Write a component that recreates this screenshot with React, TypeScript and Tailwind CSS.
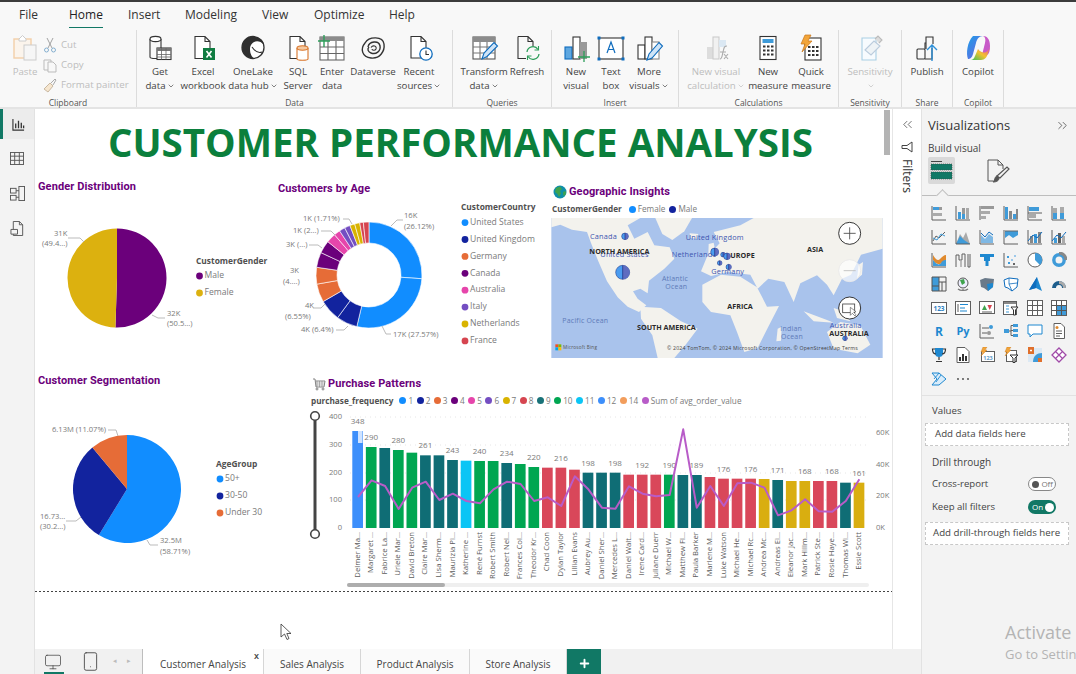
import React from "react";
import { ChevronsLeft, ChevronsRight, ChevronDown, Monitor, Smartphone, Plus } from "lucide-react";

const ui = "font-['Open_Sans','Noto_Sans',sans-serif]";
const BL = "#3f9bd9";
const GR = "#5f5f5f";
const DK = "#333333";

function pt(cx: number, cy: number, r: number, pct: number) {
  const a = (pct / 100) * Math.PI * 2 - Math.PI / 2;
  return [cx + r * Math.cos(a), cy + r * Math.sin(a)];
}
function wedge(cx: number, cy: number, r: number, a: number, b: number) {
  const [x0, y0] = pt(cx, cy, r, a);
  const [x1, y1] = pt(cx, cy, r, b);
  return `M${cx} ${cy}L${x0} ${y0}A${r} ${r} 0 ${b - a > 50 ? 1 : 0} 1 ${x1} ${y1}Z`;
}
function ring(cx: number, cy: number, R: number, r: number, a: number, b: number) {
  const [x0, y0] = pt(cx, cy, R, a);
  const [x1, y1] = pt(cx, cy, R, b);
  const [x2, y2] = pt(cx, cy, r, b);
  const [x3, y3] = pt(cx, cy, r, a);
  const l = b - a > 50 ? 1 : 0;
  return `M${x0} ${y0}A${R} ${R} 0 ${l} 1 ${x1} ${y1}L${x2} ${y2}A${r} ${r} 0 ${l} 0 ${x3} ${y3}Z`;
}

function Ic({ children }: { children: React.ReactNode }) {
  return (
    <svg width="30" height="28" viewBox="0 0 30 28" fill="none" strokeWidth="1.1" className="block mx-auto">
      {children}
    </svg>
  );
}
const page = "M7 2.5H17L22 7.5V24.5H7Z M17 2.5V7.5H22";

const rIcons: Record<string, React.ReactNode> = {
  get: (
    <Ic>
      <path d="M5 5V23C5 25 16 25 16 23V5" stroke={DK} />
      <ellipse cx="10.5" cy="5" rx="5.5" ry="2.6" stroke={DK} fill="#fff" />
      <rect x="12" y="14" width="14" height="11.5" fill="#fff" stroke={DK} />
      <rect x="12" y="14" width="14" height="3" fill="#777" />
      <path d="M12 20.5H26M12 23H26M16.5 14V25.5M21 14V25.5" stroke="#666" strokeWidth=".8" />
    </Ic>
  ),
  excel: (
    <Ic>
      <path d={page} stroke={DK} fill="#fff" />
      <rect x="15" y="14" width="12" height="12" fill="#107c41" />
      <path d="M18.5 17L23.5 23.5M23.5 17L18.5 23.5" stroke="#fff" strokeWidth="1.6" />
    </Ic>
  ),
  lake: (
    <Ic>
      <circle cx="15" cy="13.5" r="11" fill="#fff" stroke={DK} strokeWidth="1.3" />
      <path d="M4 13.5A11 11 0 0 1 15 2.5C22 2.5 26 8 26 11C20 4 12 8 12 15C12 20 14 23 16 24.5C9 25 4 19 4 13.5Z" fill="#2f2f2f" />
      <path d="M14 13C16 16 19 20 24 18" stroke={DK} />
    </Ic>
  ),
  sql: (
    <Ic>
      <path d={page} stroke={DK} fill="#fff" />
      <path d="M14 14V25C14 26.6 25 26.6 25 25V14" stroke="#d9762b" fill="#fff" />
      <ellipse cx="19.5" cy="14" rx="5.5" ry="2.2" stroke="#d9762b" fill="#f5c9a0" />
    </Ic>
  ),
  enter: (
    <Ic>
      <rect x="3" y="3" width="24" height="23" stroke="#666" fill="#fff" />
      <rect x="3" y="3" width="24" height="4" fill="#8c8c8c" />
      <path d="M3 13H27M3 19.5H27M11 7V26M19 7V26" stroke="#666" />
      <path d="M1 7H13M7 1V13" stroke="#2e9e5b" strokeWidth="1.4" />
    </Ic>
  ),
  dv: (
    <Ic>
      <path d="M7 9C11 2 25 2 26 10C27 17 22 25 13 24C4 23 2 15 7 9Z" stroke={DK} strokeWidth="1.4" />
      <path d="M10 13C11 7 21 6 22 12C23 17 18 21 13 19C10 18 9 15 11 13" stroke={DK} strokeWidth="1.4" />
      <path d="M13 13.5C15 10.5 19 12 18 15C17 17 14 16.5 14 15" stroke={DK} />
    </Ic>
  ),
  recent: (
    <Ic>
      <path d="M7 2.5H17L22 7.5V24H7Z M17 2.5V7.5H22" stroke={DK} fill="#fff" />
      <circle cx="22" cy="20" r="6.2" fill="#fff" stroke="#0f6cbd" strokeWidth="1.3" />
      <path d="M22 16.5V20.5H25" stroke="#333" />
    </Ic>
  ),
  transform: (
    <Ic>
      <rect x="4" y="3" width="22" height="22" stroke="#555" fill="#fff" />
      <rect x="4" y="3" width="22" height="5" fill="#8c8c8c" />
      <path d="M4 13H26M4 19H26M11 8V25M18 8V25" stroke="#777" />
      <path d="M13 25L15 19L25 8.5L28.5 12L18 22.5Z" fill="#cfe4f7" stroke="#0f6cbd" />
    </Ic>
  ),
  refresh: (
    <Ic>
      <path d="M6 2.5H16L21 7.5V12M6 2.5V24.5H14M16 2.5V7.5H21" stroke={DK} />
      <path d="M15 18A6 6 0 0 1 26 15.5M27 20A6 6 0 0 1 16 22.5" stroke="#2e9e5b" strokeWidth="1.3" />
      <path d="M26.5 12V16H22.5M15.5 26V22H19.5" stroke="#2e9e5b" />
    </Ic>
  ),
  nv: (
    <Ic>
      <rect x="4" y="13" width="7" height="12" fill="#5ea7e0" stroke="#0f6cbd" />
      <rect x="12" y="3" width="7" height="22" fill="#fff" stroke={DK} />
      <rect x="19" y="8" width="7" height="17" fill="#999" />
      <path d="M17 23H29M23 17V29" stroke="#2e9e5b" strokeWidth="1.3" />
    </Ic>
  ),
  tb: (
    <Ic>
      <rect x="3" y="4" width="24" height="21" stroke={DK} fill="#fff" />
      <path d="M3 25H27" stroke="#888" strokeWidth="2" />
      <path d="M11 19L15 8L19 19M12.5 15.5H17.5" stroke="#0f6cbd" strokeWidth="1.2" />
      <rect x="1.5" y="2.5" width="3" height="3" fill="#0f6cbd" />
      <rect x="25.5" y="2.5" width="3" height="3" fill="#0f6cbd" />
      <rect x="1.5" y="23.5" width="3" height="3" fill="#0f6cbd" />
      <rect x="25.5" y="23.5" width="3" height="3" fill="#0f6cbd" />
    </Ic>
  ),
  mv: (
    <Ic>
      <rect x="4" y="11" width="7" height="14" stroke={DK} fill="#fff" />
      <rect x="11" y="3" width="7" height="22" stroke={DK} fill="#fff" />
      <rect x="18" y="8" width="7" height="17" stroke="#888" fill="#fff" />
      <path d="M13 26L15 20L25 8.5L28.5 12L18 24Z" fill="#cfe4f7" stroke="#0f6cbd" />
    </Ic>
  ),
  nvc: (
    <Ic>
      <rect x="6" y="13" width="6" height="12" fill="#ddd" />
      <rect x="12" y="3" width="6" height="22" fill="#f1f1f1" stroke="#ccc" />
      <rect x="18" y="6" width="7" height="7" fill="#dbe8f3" />
      <path d="M19 25C21 25 21 22 22 18C23 14 23 12 26 12M19 18H25M23 20L27 25M27 20L23 25" stroke="#aaa" />
    </Ic>
  ),
  nm: (
    <Ic>
      <rect x="7" y="2.5" width="16" height="23" stroke={DK} fill="#fff" />
      <rect x="9.5" y="5" width="11" height="4" fill="#3f9bd9" />
      <path d="M10 12.5H12.5M14 12.5H16.5M18 12.5H20.5M10 16.5H12.5M14 16.5H16.5M18 16.5H20.5M10 20.5H12.5M14 20.5H16.5M18 20.5H20.5" stroke={DK} strokeWidth="2" />
    </Ic>
  ),
  qm: (
    <Ic>
      <rect x="9" y="4" width="16" height="22" stroke={DK} fill="#fff" />
      <path d="M12 13H14.5M16 13H18.5M20 13H22.5M12 17H14.5M16 17H18.5M20 17H22.5M12 21H14.5M16 21H18.5M20 21H22.5" stroke={DK} strokeWidth="2" />
      <path d="M9 1H15L12 7H16L6 18L9 10H5Z" fill="#f2a53a" stroke="#c9761a" strokeWidth=".7" />
    </Ic>
  ),
  sens: (
    <Ic>
      <path d="M7 4H21V26H7Z" stroke="#a9cfe4" fill="#f7fbfe" />
      <path d="M10 16L19 7L25 12L16 21Z" stroke="#bcd" fill="#eef3f6" />
      <path d="M20 5L23 2L27 6L24 9" stroke="#bbb" fill="#ddd" />
    </Ic>
  ),
  pub: (
    <Ic>
      <rect x="5" y="15" width="8" height="10" rx="1" stroke={DK} />
      <path d="M13 25H20V14M13 15V9H14" stroke={DK} />
      <path d="M14 15V3H21V10" stroke={DK} />
      <path d="M20 27V12M15 16L20 11L25 16" stroke="#2c8fd8" strokeWidth="1.4" />
    </Ic>
  ),
  cop: (
    <Ic>
      <defs>
        <linearGradient id="cg1" x1="0" y1="0" x2="1" y2="1">
          <stop offset="0" stopColor="#1aa0e8" />
          <stop offset="1" stopColor="#7a5be0" />
        </linearGradient>
        <linearGradient id="cg2" x1="0" y1="1" x2="1" y2="0">
          <stop offset="0" stopColor="#3bbf5a" />
          <stop offset=".5" stopColor="#f2c230" />
          <stop offset="1" stopColor="#e8508a" />
        </linearGradient>
      </defs>
      <path d="M10 2H20C16 2 14 5 13 9L10 20C9 24 7 25 5 25C3 20 4 8 10 2Z" fill="url(#cg1)" />
      <path d="M20 2C24 2 27 5 27 12C27 17 26 20 24 21L19 21L22 9C23 5 22 3 20 2Z" fill="#c85ac8" />
      <path d="M8 26H18C22 26 24 23 25 19L27 13C24 21 18 19 15 15L12 22C11 25 9 26 8 26Z" fill="url(#cg2)" />
    </Ic>
  ),
};

function RB({ w, icon, l1, l2, chev, off }: { w: string; icon: string; l1: string; l2?: string; chev?: boolean; off?: boolean }) {
  return (
    <div className={`${w} shrink-0 flex flex-col items-center`}>
      <div className="h-[28px]">{rIcons[icon]}</div>
      <div className={`mt-[3px] text-[9.7px] leading-[14px] whitespace-nowrap text-center ${off ? "text-[#bdbdbd]" : "text-[#444]"}`}>
        <div>{l1}</div>
        <div className="flex items-center justify-center h-[14px]">
          {l2}
          {chev && <ChevronDown size={8} strokeWidth={2} className="ml-[1px]" />}
        </div>
      </div>
    </div>
  );
}

function Group({ w, label, pl, children, off }: { w: string; label: string; pl: string; children: React.ReactNode; off?: boolean }) {
  return (
    <div className={`${w} shrink-0 h-[77px] flex flex-col border-r border-[#dcdcdc] relative`}>
      <div className={`flex ${pl} h-[68px] shrink-0 pt-[4px]`}>{children}</div>
      <div className={`text-center text-[8.5px] leading-[10px] ${off ? "text-[#777]" : "text-[#555]"}`}>{label}</div>
    </div>
  );
}

function Ribbon() {
  return (
    <div className="flex h-[81px] pt-[2px] bg-[#f8f8f8] border-b-2 border-[#e4e4e4] shrink-0 text-[#444]">
      <Group w="w-[137px]" label="Clipboard" pl="pl-[10px]">
        <div className="w-[30px] flex flex-col items-center">
          <svg width="28" height="28" viewBox="0 0 28 28" fill="none">
            <rect x="3" y="5" width="17" height="19" stroke="#f3cfa9" strokeWidth="1.4" fill="#fbf4ec" />
            <path d="M8 5L11.5 1.5L15 5V7H8Z" stroke="#ccc" fill="#fff" />
            <rect x="13" y="11" width="12" height="15" stroke="#ccc" fill="#f6f6f6" />
          </svg>
          <div className="mt-[3px] text-[9.7px] leading-[14px] text-[#bdbdbd]">Paste</div>
        </div>
        <div className="ml-[3px] flex flex-col text-[9.7px] text-[#bdbdbd] leading-[20px] pt-[1px] whitespace-nowrap">
          <div className="flex items-center gap-[4px] h-[20px]">
            <svg width="14" height="16" viewBox="0 0 14 16" fill="none" stroke="#999" strokeWidth=".9"><path d="M4 1L9 11M10 1L5 11" /><circle cx="3.5" cy="13" r="2" stroke="#7aa8cc" /><circle cx="10.5" cy="13" r="2" stroke="#7aa8cc" /></svg>
            Cut
          </div>
          <div className="flex items-center gap-[4px] h-[20px]">
            <svg width="14" height="16" viewBox="0 0 14 16" fill="none" stroke="#bbb"><path d="M1 3H8V13H1Z" /><path d="M5 5H10L13 8V15H5Z" fill="#f8f8f8" /></svg>
            Copy
          </div>
          <div className="flex items-center gap-[4px] h-[20px]">
            <svg width="14" height="16" viewBox="0 0 14 16" fill="none" stroke="#c9b8a0"><path d="M1 12L7 6L10 9L5 15Z" fill="#f6e6cf" /><path d="M8 6L12 2L13 3L10 8" stroke="#aaa" /></svg>
            Format painter
          </div>
        </div>
      </Group>
      <Group w="w-[316px]" label="Data" pl="pl-[2px]">
        <RB w="w-[42px]" icon="get" l1="Get" l2="data" chev />
        <RB w="w-[44px]" icon="excel" l1="Excel" l2="workbook" />
        <RB w="w-[56px]" icon="lake" l1="OneLake" l2="data hub" chev />
        <RB w="w-[34px]" icon="sql" l1="SQL" l2="Server" />
        <RB w="w-[34px]" icon="enter" l1="Enter" l2="data" />
        <RB w="w-[48px]" icon="dv" l1="Dataverse" />
        <RB w="w-[44px]" icon="recent" l1="Recent" l2="sources" chev />
      </Group>
      <Group w="w-[99px]" label="Queries" pl="pl-[10px]">
        <RB w="w-[42px]" icon="transform" l1="Transform" l2="data" chev />
        <RB w="w-[44px]" icon="refresh" l1="Refresh" />
      </Group>
      <Group w="w-[127px]" label="Insert" pl="pl-[4px]">
        <RB w="w-[40px]" icon="nv" l1="New" l2="visual" />
        <RB w="w-[30px]" icon="tb" l1="Text" l2="box" />
        <RB w="w-[46px]" icon="mv" l1="More" l2="visuals" chev />
      </Group>
      <Group w="w-[160px]" label="Calculations" pl="pl-[7px]">
        <RB w="w-[60px]" icon="nvc" l1="New visual" l2="calculation" chev off />
        <RB w="w-[44px]" icon="nm" l1="New" l2="measure" />
        <RB w="w-[42px]" icon="qm" l1="Quick" l2="measure" />
      </Group>
      <Group w="w-[63px]" label="Sensitivity" pl="pl-0">
        <RB w="w-[62px]" icon="sens" l1="Sensitivity" chev off />
      </Group>
      <Group w="w-[51px]" label="Share" pl="pl-0">
        <RB w="w-[50px]" icon="pub" l1="Publish" />
      </Group>
      <Group w="w-[51px]" label="Copilot" pl="pl-0">
        <RB w="w-[50px]" icon="cop" l1="Copilot" />
      </Group>
    </div>
  );
}

const tabs = [
  ["File", "w-[50px]"],
  ["Home", "w-[59px]"],
  ["Insert", "w-[57px]"],
  ["Modeling", "w-[77px]"],
  ["View", "w-[52px]"],
  ["Optimize", "w-[75px]"],
  ["Help", "w-[40px]"],
];

function Menu() {
  return (
    <div className="h-[28px] shrink-0 flex pl-[19px] bg-[#f8f8f8] border-t-2 border-[#3c3c3c] text-[12px] text-[#333]">
      {tabs.map(([t, w]) => (
        <div key={t} className={`${w} h-[26px] pt-[5px] leading-[16px]`}>
          <span className={t === "Home" ? "inline-block pb-[4px] border-b-2 border-[#117865] text-[#222]" : ""}>{t}</span>
        </div>
      ))}
    </div>
  );
}

function Rail() {
  return (
    <div className="w-[35px] shrink-0 bg-[#f3f3f3] border-r border-[#e2e2e2] flex flex-col items-center">
      <div className="w-full h-[30px] border-l-[3px] border-[#117865] bg-[#ececec] flex items-center justify-center">
        <svg width="13" height="13" viewBox="0 0 14 14" fill="none" stroke="#333" strokeWidth="1.2"><path d="M1 1V13H13" /><path d="M4 11V6M7 11V3M10 11V5M12.5 11V8" strokeWidth="1.4" /></svg>
      </div>
      <div className="h-[35px] mt-[2px] flex items-center">
        <svg width="14" height="13" viewBox="0 0 15 14" fill="none" stroke="#555"><rect x=".5" y=".5" width="14" height="13" /><path d="M.5 4.5H14.5M.5 9H14.5M5 .5V13.5M10 .5V13.5" /></svg>
      </div>
      <div className="h-[35px] flex items-center">
        <svg width="15" height="15" viewBox="0 0 16 16" fill="none" stroke="#555"><rect x=".5" y="2.5" width="6" height="5" /><rect x=".5" y="10" width="6" height="5" /><rect x="9.5" y=".5" width="6" height="15" /><path d="M6.5 5H9.5M6.5 12H9.5" /></svg>
      </div>
      <div className="h-[35px] flex items-center">
        <svg width="15" height="15" viewBox="0 0 16 16" fill="none" stroke="#555"><path d="M3.5 .5H10L13.5 4V15.5H3.5Z" /><path d="M1 9H8V14H1Z" fill="#f3f3f3" /><path d="M10 .5V4H13.5" /></svg>
      </div>
    </div>
  );
}

const lab = "#7a7a7a";
function T({ x, y, c, b, s }: { x: number; y: number; c: string; b?: boolean; s?: number }) {
  return (
    <text x={x} y={y} fontSize={s ?? 7.6} fill={b ? "#505050" : lab} fontWeight={b ? 700 : 400} fontFamily="'Open Sans',sans-serif" dominantBaseline="middle">
      {c}
    </text>
  );
}
function Lg({ x, y, col, c }: { x: number; y: number; col: string; c: string }) {
  return (
    <>
      <circle cx={x} cy={y} r="3.4" fill={col} />
      <T x={x + 5} y={y} c={c} s={8.6} />
    </>
  );
}
const title = "text-[11px] leading-[16px] font-bold text-[#6b007b] font-['Roboto',sans-serif] tracking-[0.1px]";

function GenderChart() {
  return (
    <svg width="243" height="178" viewBox="35 194 243 178" className="block">
      <path d={wedge(117, 277, 49.5, 0, 50.5)} fill="#6b007b" />
      <path d={wedge(117, 277, 49.5, 50.5, 100)} fill="#dcb10f" />
      <T x={54} y={233} c="31K" />
      <T x={42} y={243} c="(49.4...)" />
      <path d="M68 237H80L84 241" stroke="#bbb" fill="none" />
      <T x={167} y={313} c="32K" />
      <T x={167} y={323} c="(50.5...)" />
      <path d="M152 314L158 317H165" stroke="#bbb" fill="none" />
      <T x={196} y={261} c="CustomerGender" b s={8.4} />
      <Lg x={199.5} y={275} col="#6b007b" c="Male" />
      <Lg x={199.5} y={292} col="#dcb10f" c="Female" />
    </svg>
  );
}

const dSegs: [number, string][] = [
  [26.12, "#118dff"], [27.57, "#118dff"], [6.4, "#12239e"], [6.55, "#12239e"],
  [5.6, "#e66c37"], [5.1, "#e66c37"], [4.6, "#6b007b"], [3.9, "#6b007b"],
  [2.9, "#e645ab"], [1.9, "#e645ab"], [1.8, "#744ec2"], [1.71, "#744ec2"],
  [1.5, "#d9b300"], [1.55, "#d9b300"], [1.1, "#d64550"], [1.69, "#d64550"],
];

function DonutChart() {
  let acc = 0;
  return (
    <svg width="267" height="176" viewBox="278 196 267 176" className="block">
      {dSegs.map(([v, c], i) => {
        const d = ring(369, 274, 53, 32, acc, acc + v);
        acc += v;
        return <path key={i} d={d} fill={c} stroke="#fff" strokeWidth=".6" />;
      })}
      <T x={404} y={215} c="16K" />
      <T x={404} y={226} c="(26.12%)" />
      <path d="M391 225L397 219H403" stroke="#bbb" fill="none" />
      <T x={303} y={218} c="1K (1.71%)" />
      <path d="M343 218H349L352 223" stroke="#bbb" fill="none" />
      <T x={293} y={230} c="1K (2...)" />
      <path d="M321 230H331L335 234" stroke="#bbb" fill="none" />
      <T x={286} y={244} c="3K (...)" />
      <path d="M309 244H318L322 247" stroke="#bbb" fill="none" />
      <T x={290} y={270} c="3K" />
      <T x={283} y={281} c="(4....)" />
      <T x={305} y={305} c="4K" />
      <T x={285} y={316} c="(6.55%)" />
      <path d="M313 307H321L325 303" stroke="#bbb" fill="none" />
      <T x={301} y={329} c="4K (6.4%)" />
      <path d="M336 329H344L348 325" stroke="#bbb" fill="none" />
      <T x={393} y={334} c="17K (27.57%)" />
      <path d="M382 325L386 333H391" stroke="#bbb" fill="none" />
      <T x={461} y={207} c="CustomerCountry" b s={8.4} />
      {[
        ["United States", "#118dff"], ["United Kingdom", "#12239e"], ["Germany", "#e66c37"], ["Canada", "#6b007b"],
        ["Australia", "#e645ab"], ["Italy", "#744ec2"], ["Netherlands", "#d9b300"], ["France", "#d64550"],
      ].map(([n, c], i) => (
        <Lg key={n} x={465} y={221.6 + i * 16.9} col={c} c={n} />
      ))}
    </svg>
  );
}

function Bubble({ x, y, r }: { x: number; y: number; r: number }) {
  return (
    <g>
      <circle cx={x} cy={y} r={r} fill="#4a9cf0" stroke="#1c2a78" strokeWidth="1.5" />
      <path d={`M${x} ${y - r}A${r} ${r} 0 0 1 ${x} ${y + r}Z`} fill="#5f6cc0" />
      <path d={`M${x} ${y - r}V${y + r}`} stroke="#1c2a78" strokeWidth="2" />
    </g>
  );
}
function ML({ x, y, c, b, s, col }: { x: number; y: number; c: string; b?: boolean; s?: number; col?: string }) {
  return (
    <text x={x} y={y} fontSize={s ?? 22} fontWeight={b ? 700 : 400} fill={col ?? (b ? "#2a2a2a" : "#3d55b0")} fontFamily="'Open Sans',sans-serif" dominantBaseline="middle" letterSpacing={b ? 0 : 0.6}>
      {c}
    </text>
  );
}

function MapChart() {
  const land = "#f3f2ed";
  return (
    <svg width="332" height="140" viewBox="33 130 994 420" className="block">
      <rect x="33" y="130" width="994" height="420" fill="#a9c3ec" />
      <g fill={land}>
        <path d="M33 130L33 158L60 150L95 165L140 172L152 205L172 255L200 320L232 368L262 396L296 412L318 392L292 372L278 350L300 342L322 356L326 318L372 282L402 252L388 218L342 212L322 172L282 192L262 152L300 130Z" />
        <path d="M345 130H455L432 170L396 196L366 178Z" />
        <path d="M448 176L474 178L470 192L450 190Z" />
        <path d="M300 396L362 400L422 440L472 462L436 510L402 550H352L336 482L302 432Z" />
        <path d="M486 330L542 300L600 306L650 338L680 396L716 394L682 460L652 520L612 532L590 472L570 422L512 412L486 382Z" />
        <path d="M482 290L500 246L538 206L520 172L600 152L640 130H1027V222L962 240L932 300L905 312L880 362L860 330L830 302L780 326L760 382L732 322L684 312L652 342L630 300L562 292L512 304Z" />
        <path d="M860 472L900 442L960 452L990 510L952 536L880 522Z" />
        <path d="M505 208L520 204L526 234L504 240Z" />
        <path d="M712 462L724 456L722 498L708 500Z" />
        <path d="M790 410L860 436L880 444L820 440ZM880 400L910 410L930 440L890 430Z" />
        <path d="M955 270L968 262L965 300L950 312Z" />
      </g>
      <ML x={149} y={187} c="Canada" />
      <ML x={436} y={191} c="United Kingdom" />
      <ML x={180} y={241} c="United States" />
      <ML x={147} y={232} c="NORTH AMERICA" b s={21.5} />
      <ML x={394} y={241} c="Netherlands" />
      <ML x={570} y={245} c="UROPE" b s={21.5} />
      <ML x={800} y={225} c="ASIA" b s={21.5} />
      <ML x={513} y={291} c="Germany" />
      <ML x={365} y={312} c="Atlantic" s={21} col="#5d7ab8" />
      <ML x={375} y={336} c="Ocean" s={21} col="#5d7ab8" />
      <ML x={561} y={397} c="AFRICA" b s={21.5} />
      <ML x={66} y={440} c="Pacific Ocean" s={21} col="#5d7ab8" />
      <ML x={290} y={461} c="SOUTH AMERICA" b s={21.5} />
      <ML x={720} y={464} c="Indian" s={21} col="#5d7ab8" />
      <ML x={722} y={488} c="Ocean" s={21} col="#5d7ab8" />
      <ML x={868} y={453} c="Australia" />
      <ML x={867} y={477} c="AUSTRALIA" b s={21.5} />
      <Bubble x={247} y={293} r={21} />
      <Bubble x={254} y={185} r={10} />
      <Bubble x={523} y={232} r={12} />
      <Bubble x={548} y={240} r={7} />
      <Bubble x={560} y={245} r={10} />
      <Bubble x={538} y={265} r={7} />
      <Bubble x={565} y={277} r={8} />
      <Bubble x={914} y={491} r={7} />
      <circle cx="928" cy="176" r="33" fill="#fff" stroke="#111" strokeWidth="2.5" />
      <path d="M910 176H946M928 158V194" stroke="#444" strokeWidth="2.5" />
      <circle cx="928" cy="288" r="33" fill="#fff" fillOpacity=".65" stroke="#e8e8e8" strokeWidth="2.5" />
      <path d="M910 288H946" stroke="#bbb" strokeWidth="2.5" />
      <circle cx="928" cy="400" r="33" fill="#fff" stroke="#111" strokeWidth="2.5" />
      <rect x="907" y="388" width="36" height="26" fill="none" stroke="#444" strokeWidth="2.5" />
      <path d="M930 398L930 422L936 416L944 424L947 420L940 413L947 411Z" fill="#fff" stroke="#333" strokeWidth="1.6" />
      <rect x="45" y="509" width="9" height="9" fill="#f25022" />
      <rect x="54" y="509" width="9" height="9" fill="#7fba00" />
      <rect x="45" y="518" width="9" height="9" fill="#00a4ef" />
      <rect x="54" y="518" width="9" height="9" fill="#ffb900" />
      <ML x={68} y={519} c="Microsoft Bing" s={14} col="#555" />
      <ML x={380} y={523} c="© 2024 TomTom, © 2024 Microsoft Corporation, © OpenStreetMap  Terms" s={15.5} col="#444" />
    </svg>
  );
}

function SegChart() {
  return (
    <svg width="270" height="202" viewBox="35 388 270 202" className="block">
      <path d={wedge(127, 488, 54, 0, 58.71)} fill="#118dff" />
      <path d={wedge(127, 488, 54, 58.71, 88.93)} fill="#12239e" />
      <path d={wedge(127, 488, 54, 88.93, 100)} fill="#e66c37" />
      <T x={52} y={429} c="6.13M (11.07%)" />
      <path d="M108 429H116L118 435" stroke="#bbb" fill="none" />
      <T x={40} y={516} c="16.73..." />
      <T x={40} y={526} c="(30.2...)" />
      <path d="M66 520H76L81 516" stroke="#bbb" fill="none" />
      <T x={160} y={540} c="32.5M" />
      <T x={160} y={551} c="(58.71%)" />
      <path d="M147 539L150 544H158" stroke="#bbb" fill="none" />
      <T x={216} y={464} c="AgeGroup" b s={8.4} />
      <Lg x={220} y={478} col="#118dff" c="50+" />
      <Lg x={220} y={495} col="#12239e" c="30-50" />
      <Lg x={220} y={512} col="#e66c37" c="Under 30" />
    </svg>
  );
}

const C: Record<string, string> = { b: "#3d8ffb", g: "#00a651", t: "#0f6d75", r: "#d9475a", y: "#d9ae10", c: "#0bc5f5" };
const names = ["Delmer Ma...", "Margaret ...", "Fabrice La...", "Uriele Mar...", "David Breton", "Claire Mar...", "Lisa Sherm...", "Maurizia Pi...", "Katherine ...", "René Furnst", "Robert Smith", "Robert Nel...", "Frances Col...", "Theodor Kr...", "Chad Coon", "Dylan Taylor", "Lillian Evans", "Aubrey Au...", "Daniel Sher...", "Mercedes L...", "Daniel Walt...", "Irene Card...", "Juliane Duerr", "Michael W...", "Matthew Fl...", "Paula Barker", "Marlene M...", "Luke Watson", "Michael He...", "Michael Rc...", "Andrea Mc...", "Andreas Ei...", "Eleanor Jac...", "Mark Hillm...", "Patrick Ste...", "Rosie Haye...", "Thomas Wi...", "Essie Scott"];
const cols = "bgtggtttcggtggrrrtttrrrgttrrrrytyyrrty".slice(0, 38);
const tops = [180, 228, 231, 237, 245, 253, 253, 267, 269, 270, 270, 276, 279, 288, 290, 290, 296, 305, 305, 305, 311, 311, 311, 311, 312, 312, 318, 323, 323, 323, 324, 327, 330, 330, 330, 330, 335, 335];
const lineY = [378, 328, 345, 414, 350, 332, 387, 368, 390, 397, 355, 332, 339, 390, 379, 405, 316, 355, 410, 413, 346, 368, 376, 372, 175, 410, 345, 405, 337, 335, 350, 433, 418, 385, 421, 422, 390, 325];
const vals: Record<number, string> = { 0: "348", 1: "290", 3: "280", 5: "261", 7: "243", 9: "240", 11: "234", 13: "220", 15: "216", 17: "198", 19: "198", 21: "192", 23: "190", 25: "189", 27: "176", 29: "176", 31: "171", 33: "168", 35: "168", 37: "161" };

function ComboChart() {
  const y = (z: number) => 370 + z / 3;
  const line = lineY.map((v, i) => `${358 + 13.55 * i},${y(v)}`).join(" ");
  return (
    <svg width="585" height="182" viewBox="305 408 585 182" className="block">
      <path d="M315 416V533" stroke="#444" strokeWidth="3" />
      <circle cx="315" cy="415" r="4.3" fill="#fff" stroke="#444" strokeWidth="1.6" />
      <circle cx="315" cy="533" r="4.3" fill="#fff" stroke="#444" strokeWidth="1.6" />
      {[["400", 416], ["300", 444], ["200", 472], ["100", 499], ["0", 527]].map(([t, yy]) => (
        <text key={t} x={342} y={yy as number} textAnchor="end" fontSize="7.6" fill={lab} fontFamily="'Open Sans',sans-serif" dominantBaseline="middle">{t}</text>
      ))}
      {[416, 444, 472, 499].map((v) => (
        <path key={v} d={`M350 ${v}H866`} stroke="#e6e6e6" strokeDasharray="1 4" />
      ))}
      {names.map((n, i) => {
        const x = 352.3 + 13.55 * i;
        const cx = x + 5.35;
        return (
          <g key={n}>
            <rect x={x} y={y(tops[i])} width="10.7" height={527 - y(tops[i])} fill={C[cols[i]]} />
            {vals[i] && (
              <text x={cx} y={y(tops[i]) - 9} textAnchor="middle" fontSize="8" fill={lab} fontFamily="'Open Sans',sans-serif" dominantBaseline="middle">{vals[i]}</text>
            )}
            <text transform={`translate(${cx} 531) rotate(-90)`} textAnchor="end" fontSize="7.7" fill="#5c5c5c" fontFamily="'Open Sans',sans-serif" dominantBaseline="middle">{n}</text>
          </g>
        );
      })}
      <rect x="358" y="430" width="4.5" height="12" fill="#cfe3ff" />
      <polyline points={line} fill="none" stroke="#b85cc8" strokeWidth="2" strokeLinejoin="round" />
      {[["60K", 432], ["40K", 464], ["20K", 495], ["0K", 527]].map(([t, yy]) => (
        <text key={t} x={876} y={yy as number} fontSize="7.6" fill={lab} fontFamily="'Open Sans',sans-serif" dominantBaseline="middle">{t}</text>
      ))}
      <rect x="347" y="582" width="522" height="4" rx="2" fill="#efefef" />
      <rect x="347" y="582" width="98" height="4" rx="2" fill="#adadad" />
    </svg>
  );
}

const legendItems: [string, string][] = [
  ["1", "#118dff"], ["2", "#12239e"], ["3", "#e66c37"], ["4", "#6b007b"], ["5", "#e645ab"], ["6", "#744ec2"], ["7", "#d9b300"],
  ["8", "#d64550"], ["9", "#197278"], ["10", "#00a651"], ["11", "#0bc5f5"], ["12", "#3d8ffb"], ["14", "#f29d5c"], ["Sum of avg_order_value", "#b85cc8"],
];

function Canvas() {
  return (
    <div className="relative flex-1 min-w-0 bg-white flex flex-col">
      <div className="h-[70px] w-[851px] pt-[10px] shrink-0 text-center text-[38.5px] leading-[46px] font-bold text-[#0b7f3c] font-['Open_Sans',sans-serif] whitespace-nowrap">
        CUSTOMER PERFORMANCE ANALYSIS
      </div>
      <div className="flex h-[194px] shrink-0">
        <div className="w-[243px] shrink-0 pl-[3px]">
          <div className={title}>Gender Distribution</div>
          <div className="-ml-[3px]"><GenderChart /></div>
        </div>
        <div className="w-[267px] shrink-0 pt-[2px]">
          <div className={title}>Customers by Age</div>
          <DonutChart />
        </div>
        <div className="w-[332px] ml-[6px] shrink-0 pt-[5px]">
          <div className={`${title} flex items-center gap-[2px] pl-[2px]`}>
            <svg width="14" height="14" viewBox="0 0 14 14">
              <circle cx="7" cy="7" r="6.5" fill="#0f8fa8" />
              <path d="M3 3L7 1.5L9 4L7 6L8 8.5L6 12L4.5 9L2 7Z" fill="#3fa34d" />
              <path d="M10 7L13 6L12.5 10L10.5 11Z" fill="#3fa34d" />
            </svg>
            Geographic Insights
          </div>
          <div className="h-[16px] mt-[1px] mb-[1px] flex items-center text-[8.2px] text-[#7a7a7a] pl-[1px]">
            <span className="font-bold text-[#505050] mr-[7px]">CustomerGender</span>
            <span className="w-[7px] h-[7px] rounded-full bg-[#118dff] mr-[2px]" />
            <span className="mr-[4px]">Female</span>
            <span className="w-[7px] h-[7px] rounded-full bg-[#12239e] mr-[2px]" />
            <span>Male</span>
          </div>
          <MapChart />
        </div>
      </div>
      <div className="flex h-[218px] shrink-0 w-[857px]">
        <div className="w-[270px] shrink-0 pl-[3px]">
          <div className={title}>Customer Segmentation</div>
          <div className="-ml-[3px]"><SegChart /></div>
        </div>
        <div className="w-[585px] shrink-0 pt-[3px]">
          <div className={`${title} flex items-center gap-[2px] pl-[7px]`}>
            <svg width="14" height="13" viewBox="0 0 14 13" fill="none" stroke="#777" strokeWidth=".9">
              <path d="M1 1H3L4 9H12L13 3H3.4" /><path d="M5 3V9M7.5 3V9M10 3V9M3.6 5H12.7M3.8 7H12.3" strokeWidth=".5" />
              <circle cx="5" cy="11" r="1" /><circle cx="11" cy="11" r="1" />
            </svg>
            Purchase Patterns
          </div>
          <div className="h-[16px] mt-[1px] flex items-center text-[8.2px] text-[#7a7a7a] pl-[6px] whitespace-nowrap">
            <span className="font-bold text-[#505050] mr-[6px]">purchase_frequency</span>
            {legendItems.map(([t, c]) => (
              <span key={t} className="flex items-center mr-[3.5px]">
                <span className="w-[7px] h-[7px] rounded-full mr-[2px]" style={{ backgroundColor: c }} />
                {t}
              </span>
            ))}
          </div>
          <ComboChart />
        </div>
      </div>
      <div className="h-[1px] w-[857px] shrink-0 bg-[repeating-linear-gradient(90deg,#444_0_2px,transparent_2px_4px)]" />
      <div className="absolute left-[849px] top-[1px] w-[6px] h-[45px] bg-[#b4b4b4]" />
      <svg className="absolute left-[245px] top-[514px]" width="14" height="18" viewBox="0 0 14 18" fill="#fff" stroke="#333" strokeWidth=".8">
        <path d="M1 1V14L4.5 11L7 16.5L9 15.5L6.8 10.5H11Z" />
      </svg>
    </div>
  );
}

function Filters() {
  return (
    <div className="w-[29px] shrink-0 bg-white border-l border-[#e6e6e6] flex flex-col items-center pt-[8px] text-[#333]">
      <ChevronsLeft size={15} strokeWidth={1.1} />
      <svg width="12" height="12" viewBox="0 0 12 12" fill="none" stroke="#444" className="mt-[9px]">
        <path d="M11 1V11L6 7.5H1V4.5H6Z" />
      </svg>
      <div className="mt-[6px] text-[12px] font-medium leading-[14px] [writing-mode:vertical-rl]">Filters</div>
    </div>
  );
}

function Tabs() {
  const tabBase = "h-full flex items-center justify-center pt-[6px] text-[10px] border-r border-[#d6d6d6] text-[#444]";
  return (
    <div className="h-[25px] shrink-0 flex bg-[#f1f1f1]">
      <div className="w-[108px] h-full flex items-center border-r border-[#bdbdbd] relative text-[#444]">
        <Monitor size={18} strokeWidth={1} className="ml-[9px]" />
        <Smartphone size={21} strokeWidth={1} className="ml-[18px]" />
        <span className="ml-[12px] text-[7px] text-[#bbb]">◂</span>
        <span className="ml-[10px] text-[7px] text-[#bbb]">▸</span>
        <div className="absolute left-[9px] bottom-0 w-[20px] h-[2px] bg-[#117865]" />
      </div>
      <div className={`${tabBase} w-[121px] bg-white relative text-[#222]`}>
        Customer Analysis
        <span className="absolute right-[4px] top-[1px] text-[9px] font-semibold leading-[12px]">x</span>
      </div>
      <div className={`${tabBase} w-[97px] bg-[#fafafa]`}>Sales Analysis</div>
      <div className={`${tabBase} w-[109px] bg-[#fafafa]`}>Product Analysis</div>
      <div className={`${tabBase} w-[97px] bg-[#fafafa]`}>Store Analysis</div>
      <div className="w-[34px] h-full bg-[#117865] flex items-center justify-center pt-[4px]">
        <Plus size={13} strokeWidth={3.5} color="#fff" />
      </div>
    </div>
  );
}

const b = (x: number, y: number, w: number, h: number, f = BL) => <rect x={x} y={y} width={w} height={h} fill={f} />;
const axes = <path d="M1 1V15H15" stroke={GR} fill="none" />;
const sp = (d: string, c = GR, w = 1) => <path d={d} stroke={c} strokeWidth={w} fill="none" />;
const vt = (x: number, y: number, s: number, t: string, f = "#0f6cbd") => (
  <text x={x} y={y} fontSize={s} fontWeight="700" fill={f} fontFamily="'Open Sans',sans-serif" textAnchor="middle">{t}</text>
);

const vizIcons: React.ReactNode[] = [
  <>{axes}{b(2, 2, 6, 3)}{b(8, 2, 3, 3, "#999")}{b(2, 8, 9, 3, "#aaa")}</>,
  <>{axes}{b(3, 7, 3, 7)}{b(7, 3, 3, 11, "#999")}{b(11, 3, 3, 11, "#aaa")}{b(7, 9, 3, 5)}</>,
  <>{sp("M1 1V15")}{b(2, 1, 13, 3, "#999")}{b(2, 6, 9, 3, "#aaa")}{b(2, 11, 5, 3, "#aaa")}</>,
  <>{axes}{b(2, 2, 3, 12)}{b(6, 6, 3, 8, "#888")}{b(10, 9, 3, 5)}{b(13, 4, 2, 10, "#888")}</>,
  <>{sp("M1 1V15H15M1 8H15")}{b(2, 2, 10, 4)}{b(2, 9, 7, 4, "#aaa")}</>,
  <>{axes}{b(2, 3, 4, 11)}{b(2, 3, 4, 5, "#aaa")}{b(9, 2, 4, 12, "#aaa")}{b(9, 8, 4, 6)}</>,
  <>{axes}{sp("M2 12L5 7L8 9L14 3", GR)}{sp("M2 9L6 11L10 5L14 7", BL)}</>,
  <><path d="M1 15L5 5L8 9L11 3L15 15Z" fill="#aaa" /><path d="M1 15L5 7L9 11L15 15Z" fill={BL} />{axes}</>,
  <>{axes}<path d="M2 6L6 10L10 5L14 8V14H2Z" fill="#7fb8e4" />{sp("M2 4L6 8L10 3L14 6", "#0f6cbd")}</>,
  <>{axes}<path d="M2 2H15V6L10 9L6 6L2 9Z" fill={BL} />{sp("M2 2H15", "#666")}</>,
  <>{axes}{b(3, 7, 3, 7, "#888")}{b(7, 5, 3, 9, BL)}{b(11, 3, 3, 11, "#888")}{sp("M1 12L6 6L10 9L15 3", "#0f6cbd")}</>,
  <>{axes}{b(3, 9, 3, 5, BL)}{b(7, 4, 3, 10, GR)}{b(11, 7, 3, 7, "#aaa")}{sp("M1 12L6 6L10 9L15 3", "#0f6cbd")}</>,
  <>{axes}<path d="M2 3C5 8 7 9 9 7S13 3 15 3V8C12 9 10 13 7 12S3 10 2 8Z" fill="#e08a2e" /><path d="M2 8C5 12 8 14 10 11S13 8 15 8V14H2Z" fill={BL} /></>,
  <>{sp("M1 15V3H4V8H7V2H10V6M10 6V15M13 2V15H15V2", GR)}{b(5, 9, 2, 6, "#bbb")}</>,
  <><path d="M1 2H15V5H11V9H9.5V14H6.5V9H5V5H1Z" fill="#1e88d0" /></>,
  <>{axes}{b(4, 4, 2, 2)}{b(8, 7, 2, 2, "#9cc8ea")}{b(11, 3, 2, 2, "#9cc8ea")}{b(5, 10, 2, 2)}{b(10, 11, 2, 2, "#666")}</>,
  <><circle cx="8" cy="8" r="7" fill="#fff" stroke={GR} /><path d="M8 8V1A7 7 0 0 1 13 13Z" fill={BL} /></>,
  <><circle cx="8" cy="8" r="5.2" fill="none" stroke={BL} strokeWidth="3.4" /><path d="M8 1A7 7 0 0 1 15 8" stroke="#888" strokeWidth="3" fill="none" /></>,
  <>{b(1, 1, 7, 9)}{b(1, 10, 7, 5)}{sp("M1 1H15V15H1ZM8 1V15M8 6H15M11 6V15M1 10H8", "#555")}</>,
  <><circle cx="8" cy="7" r="5" fill="#eef" stroke="#555" /><path d="M5 4L9 3L10 7L7 9Z" fill="#3fa34d" />{sp("M3 13C5 15 11 15 13 13M8 13V15", "#777", 1.2)}</>,
  <><path d="M1 4L6 2L15 3L14 11L9 15L5 12L2 11Z" fill="#6a7a8a" /><path d="M8 8L14 7L14 11L9 15Z" fill="#1e88d0" /></>,
  <><path d="M1 4L6 2L15 3L14 11L9 15L5 12L2 11Z" fill="#fff" stroke="#0f6cbd" />{sp("M6 2V8L14 7M6 8L9 15", "#0f6cbd", .8)}</>,
  <><path d="M10 1L15 15L9 12L2 14Z" fill="#1e88d0" /><path d="M10 1L9 12L2 14Z" fill="#0f6cbd" /></>,
  <><path d="M1 12A7 7 0 0 1 15 12H11A3 3 0 0 0 5 12Z" fill="#1c5d8c" /><path d="M8 5A7 7 0 0 1 15 12H12A4 4 0 0 0 8 8Z" fill="#aaa" /></>,
  <><rect x=".5" y="2.5" width="15" height="11" fill="#fff" stroke={GR} />{vt(8, 11, 6.5, "123", "#2f7fc1")}</>,
  <><rect x=".5" y="1.5" width="15" height="13" fill="#fff" stroke={GR} />{sp("M3 4V12", GR)}{sp("M5 4.5H13M5 8H10M5 11H12", "#1e88d0", 1.2)}</>,
  <><rect x=".5" y="1.5" width="15" height="12" fill="#fff" stroke={GR} /><path d="M3 10L5.5 5L8 10Z" fill="#3fa34d" /><path d="M8.5 5H13L10.7 10Z" fill="#d64550" />{sp("M3 12H13", GR)}</>,
  <><rect x=".5" y="1.5" width="13" height="13" fill="#fff" stroke={GR} />{b(1, 2, 12, 2, "#888")}{sp("M3 6H6M3 9H6M3 12H6", BL)}<path d="M8 7H15L12.5 10V15H10.5V10Z" fill="#fff" stroke="#333" /></>,
  <><rect x=".5" y=".5" width="15" height="15" fill="#fff" stroke={GR} />{sp("M.5 5.5H15.5M.5 10.5H15.5M5.5 .5V15.5M10.5 .5V15.5", GR)}</>,
  <><rect x=".5" y=".5" width="15" height="15" fill={BL} stroke={GR} />{b(1, 1, 14, 4, "#fff")}{b(1, 1, 4, 14, "#fff")}{sp("M.5 5.5H15.5M.5 10.5H15.5M5.5 .5V15.5M10.5 .5V15.5", "#555")}</>,
  <>{vt(8, 13, 12, "R", "#1e88d0")}</>,
  <>{vt(8, 12, 11, "Py", "#1e88d0")}</>,
  <>{axes}{sp("M3 5H10M3 10H8", GR)}<circle cx="12" cy="4" r="2" fill={BL} /><circle cx="10" cy="10" r="2" fill="#999" /></>,
  <>{b(1, 6, 5, 4)}{b(10, 1, 5, 3)}{b(10, 6, 5, 3)}{b(10, 11, 5, 3)}{sp("M6 8H8M8 2.5V12.5M8 2.5H10M8 7.5H10M8 12.5H10", GR)}</>,
  <><path d="M1 2H15V11H6L3 14V11H1Z" fill="#fff" stroke="#1e88d0" /></>,
  <><path d="M3 .5H10L13.5 4V15.5H3Z" fill="#fff" stroke={GR} />{sp("M5 8H11M5 10.5H11M5 13H9", GR)}<circle cx="6" cy="4.5" r="1.5" fill="#e08a2e" /></>,
  <><path d="M4 1H12V6C12 9 10 10 8 10S4 9 4 6Z" fill="#1e88d0" />{sp("M4 2H1.5C1.5 6 3 7 5 7M12 2H14.5C14.5 6 13 7 11 7M8 10V13M5 14.5H11", "#333", 1.2)}</>,
  <><path d="M2 .5H10L14 4.5V15.5H2Z" fill="#fff" stroke={GR} />{b(4, 10, 2, 4, "#333")}{b(7, 7, 2, 7, "#333")}{b(10, 9, 2, 5, "#333")}</>,
  <><rect x="2.5" y="4.5" width="13" height="10" fill="#fff" stroke={GR} />{vt(9, 12.5, 5.5, "123", "#5f9bc7")}<path d="M4 0H8L6 3H8L2 9L4 5H2Z" fill="#f2a53a" stroke="#c9761a" strokeWidth=".4" /></>,
  <><rect x="3.5" y="3.5" width="10" height="11" fill="#fff" stroke={GR} /><path d="M7 8H15L12 11V15.5H10V11Z" fill="#fff" stroke="#333" /><path d="M4 0H8L6 3H8L2 9L4 5H2Z" fill="#f2a53a" stroke="#c9761a" strokeWidth=".4" /></>,
  <>{b(1, 1, 14, 14, "#dce9f4")}<path d="M6 15C6 9 10 6 15 6V15Z" fill={BL} />{b(1, 0, 6, 7, "#e0702c")}{sp("M3 3.5H5M4 2.5V4.5", "#fff")}{b(11, 11, 4, 4, "#e0702c")}</>,
  <><path d="M8 1L15 8L8 15L1 8Z" fill="#fff" stroke="#a04aa8" strokeWidth="1.3" />{sp("M4.5 4.5L11.5 11.5M11.5 4.5L4.5 11.5", "#a04aa8", 1.2)}</>,
  <><path d="M1 2H8L15 8L8 14H1L6 8Z" fill="#d9ecfa" stroke="#1e88d0" />{sp("M8 2L3 8M10 4L5 11", "#1e88d0", .9)}</>,
  <><circle cx="3" cy="8" r=".9" fill="#444" /><circle cx="8" cy="8" r=".9" fill="#444" /><circle cx="13" cy="8" r=".9" fill="#444" /></>,
];

function Toggle({ on }: { on?: boolean }) {
  return on ? (
    <div className="w-[28px] h-[14px] rounded-full bg-[#117865] flex items-center justify-between pl-[4px] pr-[2px] text-[8px] text-white">
      On<span className="w-[9px] h-[9px] rounded-full bg-white" />
    </div>
  ) : (
    <div className="w-[28px] h-[14px] rounded-full border border-[#888] bg-white flex items-center justify-between pl-[3px] pr-[2px] text-[8px] text-[#777]">
      <span className="w-[7px] h-[7px] rounded-full bg-[#555]" />Off
    </div>
  );
}

function VizPane() {
  const row = "flex items-center justify-between pl-[10px] pr-[20px] text-[9.6px] text-[#444] h-[14px]";
  const box = "mx-[3px] w-[144px] h-[23px] bg-white border border-dashed border-[#c8c8c8] flex items-center text-[9.7px] text-[#444] whitespace-nowrap";
  return (
    <div className="w-[155px] shrink-0 bg-[#f3f3f3] border-l border-[#e2e2e2] relative flex flex-col overflow-hidden">
      <div className="flex items-center justify-between pl-[6px] pr-[6px] pt-[7px] h-[25px] text-[#333]">
        <span className="text-[13px] font-medium leading-[18px]">Visualizations</span>
        <ChevronsRight size={15} strokeWidth={1.1} />
      </div>
      <div className="mt-[7px] pl-[6px] h-[14px] text-[10px] leading-[14px] font-medium text-[#444]">Build visual</div>
      <div className="mt-[2px] flex h-[39px] border-b border-[#bdbdbd] pl-[6px] relative">
        <div className="w-[27px] h-[27px] bg-[#d9d9d9] rounded-[2px] flex items-center justify-center">
          <svg width="23" height="19" viewBox="0 0 23 19">
            <path d="M1 .5H12" stroke="#444" />
            <rect x="1" y="3" width="21" height="6" fill="#117865" stroke="#444" strokeDasharray="1 1" strokeWidth=".6" />
            <rect x="1" y="11" width="21" height="7" fill="#117865" stroke="#444" strokeDasharray="1 1" strokeWidth=".6" />
          </svg>
        </div>
        <svg width="24" height="26" viewBox="0 0 24 26" fill="none" stroke="#555" className="ml-[31px] mt-[1px]">
          <path d="M7 23H2V2H12L17 7V11" />
          <path d="M12 2V7H17" />
          <path d="M11 18L21 9L23 11L14 20Z" strokeWidth="1.2" />
          <path d="M7 24C10 24 13 23 13 20L11 18C9 18 9 22 7 24Z" fill="#555" />
        </svg>
        <div className="absolute left-[16px] bottom-[-5px] w-[9px] h-[9px] rotate-45 bg-[#f3f3f3] border-l border-t border-[#bdbdbd]" />
      </div>
      <div className="mt-[5px] pl-[5px] pb-[5px] h-[195px] border-b border-[#e2e2e2] grid grid-cols-[repeat(6,24px)] auto-rows-[23.7px]">
        {vizIcons.map((ic, i) => (
          <div key={i} className="flex items-center justify-center">
            <svg width="16" height="16" viewBox="0 0 16 16">{ic}</svg>
          </div>
        ))}
      </div>
      <div className="pl-[10px] mt-[8px] h-[14px] text-[9.7px] leading-[14px] text-[#444]">Values</div>
      <div className={`${box} mt-[5px] pl-[9px]`}>Add data fields here</div>
      <div className="pl-[10px] mt-[9px] h-[14px] text-[10px] leading-[14px] font-medium text-[#444]">Drill through</div>
      <div className={`${row} mt-[8px]`}>Cross-report<Toggle /></div>
      <div className={`${row} mt-[9px]`}>Keep all filters<Toggle on /></div>
      <div className={`${box} mt-[8px] pl-[7px]`}>Add drill-through fields here</div>
      <div className="absolute left-[83px] top-[511px] whitespace-nowrap text-[#b4b4b4] font-['Open_Sans',sans-serif]">
        <div className="text-[18px] leading-[24px]">Activate</div>
        <div className="text-[13px] leading-[20px]">Go to Settings</div>
      </div>
    </div>
  );
}

export default function App() {
  return (
    <div className={`${ui} w-[1076px] h-[674px] overflow-hidden flex flex-col bg-white`}>
      <Menu />
      <Ribbon />
      <div className="flex flex-1 min-h-0">
        <Rail />
        <div className="flex-1 min-w-0 flex flex-col">
          <div className="flex flex-1 min-h-0">
            <Canvas />
            <Filters />
          </div>
          <Tabs />
        </div>
        <VizPane />
      </div>
    </div>
  );
}
